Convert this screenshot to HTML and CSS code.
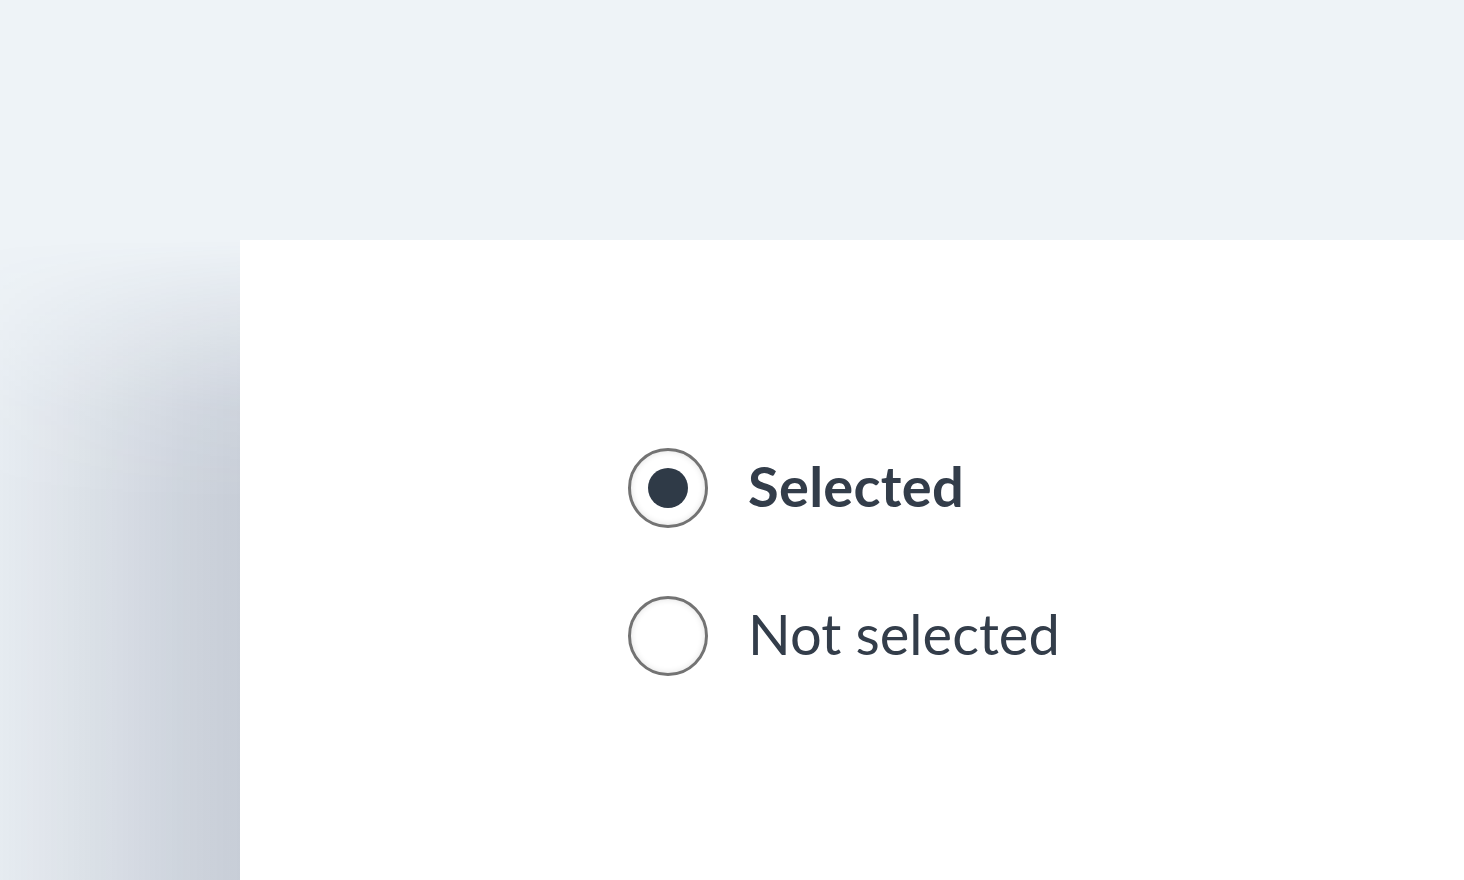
FILE: index.html
```html
<!DOCTYPE html>
<html>
<head>
<meta charset="utf-8">
<link rel="stylesheet" href="styles.css">
</head>
<body>
<div class="card">
  <div class="options">
    <label class="option">
      <span class="radio checked"><span class="dot"></span></span>
      <span class="label bold">Selected</span>
    </label>
    <label class="option">
      <span class="radio"></span>
      <span class="label">Not selected</span>
    </label>
  </div>
</div>
</body>
</html>
```
FILE: styles.css
```css
html, body {
  margin: 0;
  padding: 0;
  width: 1464px;
  height: 880px;
  overflow: hidden;
  background: #eef3f7;
  font-family: "Lato", "Noto Sans", sans-serif;
}
body {
  padding: 240px 0 0 240px;
  box-sizing: border-box;
}
.card {
  position: relative;
  background: #fff;
  width: 1224px;
  height: 640px;
  padding: 208px 0 0 388px;
  box-sizing: border-box;
}
.card::before {
  content: "";
  position: absolute;
  top: 0;
  bottom: 0;
  right: 100%;
  width: 240px;
  background: linear-gradient(to right,
    rgba(48, 58, 92, 0.04) 0%,
    rgba(48, 58, 92, 0.08) 25%,
    rgba(48, 58, 92, 0.12) 50%,
    rgba(48, 58, 92, 0.165) 75%,
    rgba(48, 58, 92, 0.2) 100%);
  -webkit-mask-image: linear-gradient(to bottom,
    rgba(0,0,0,0) 0px,
    rgba(0,0,0,0.1) 20px,
    rgba(0,0,0,0.45) 90px,
    rgba(0,0,0,0.85) 170px,
    rgba(0,0,0,1) 260px);
  mask-image: linear-gradient(to bottom,
    rgba(0,0,0,0) 0px,
    rgba(0,0,0,0.1) 20px,
    rgba(0,0,0,0.45) 90px,
    rgba(0,0,0,0.85) 170px,
    rgba(0,0,0,1) 260px);
}
.options {
  display: flex;
  flex-direction: column;
  gap: 68px;
}
.option {
  display: flex;
  align-items: center;
  gap: 40px;
  height: 80px;
}
.radio {
  width: 80px;
  height: 80px;
  border-radius: 50%;
  border: 3px solid #737373;
  box-sizing: border-box;
  background: #fff;
  box-shadow: inset 0 0 6px rgba(0, 0, 0, 0.12);
  display: flex;
  align-items: center;
  justify-content: center;
  flex: none;
}
.dot {
  width: 40px;
  height: 40px;
  border-radius: 50%;
  background: #2f3a47;
}
.label {
  font-size: 56px;
  color: #333d4a;
  line-height: 1;
  padding-bottom: 5px;
}
.bold {
  font-weight: 700;
  letter-spacing: 0.3px;
}
```
